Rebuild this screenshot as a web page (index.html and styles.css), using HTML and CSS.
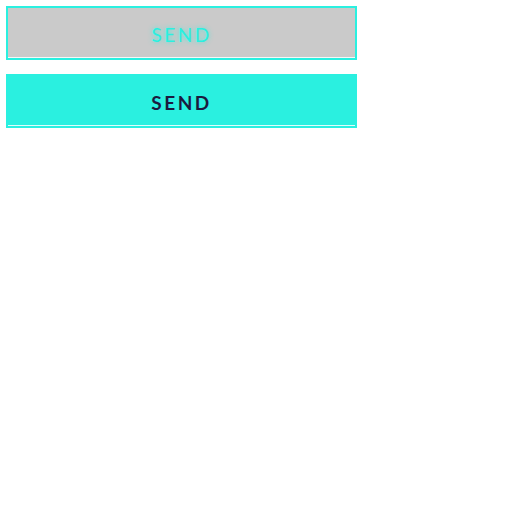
FILE: index.html
```html
<!DOCTYPE html>
<html>
<head>
<meta charset="utf-8">
<link rel="stylesheet" href="styles.css">
</head>
<body>
<div class="stack">
  <button class="btn btn-disabled">SEND</button>
  <button class="btn btn-primary">SEND</button>
</div>
</body>
</html>
```
FILE: styles.css
```css
html, body {
  margin: 0;
  padding: 0;
  background: #ffffff;
}
.stack {
  display: flex;
  flex-direction: column;
  gap: 14px;
  padding: 6px;
  width: 351px;
}
.btn {
  box-sizing: border-box;
  width: 351px;
  height: 54px;
  border: 2px solid #2af0e0;
  box-shadow: inset 0 -1px 0 rgba(255,255,255,0.85);
  font-family: Lato, "Open Sans", sans-serif;
  font-size: 19px;
  letter-spacing: 2.5px;
  padding: 2px 0 0 0;
  margin: 0;
  cursor: pointer;
}
.btn-disabled {
  background: #cacaca;
  color: #2af0e0;
  font-weight: 400;
  text-shadow: 0 0 5px rgba(42,240,224,0.8);
}
.btn-primary {
  background: #2af0e0;
  color: #1b1a3f;
  font-weight: 700;
}
```
